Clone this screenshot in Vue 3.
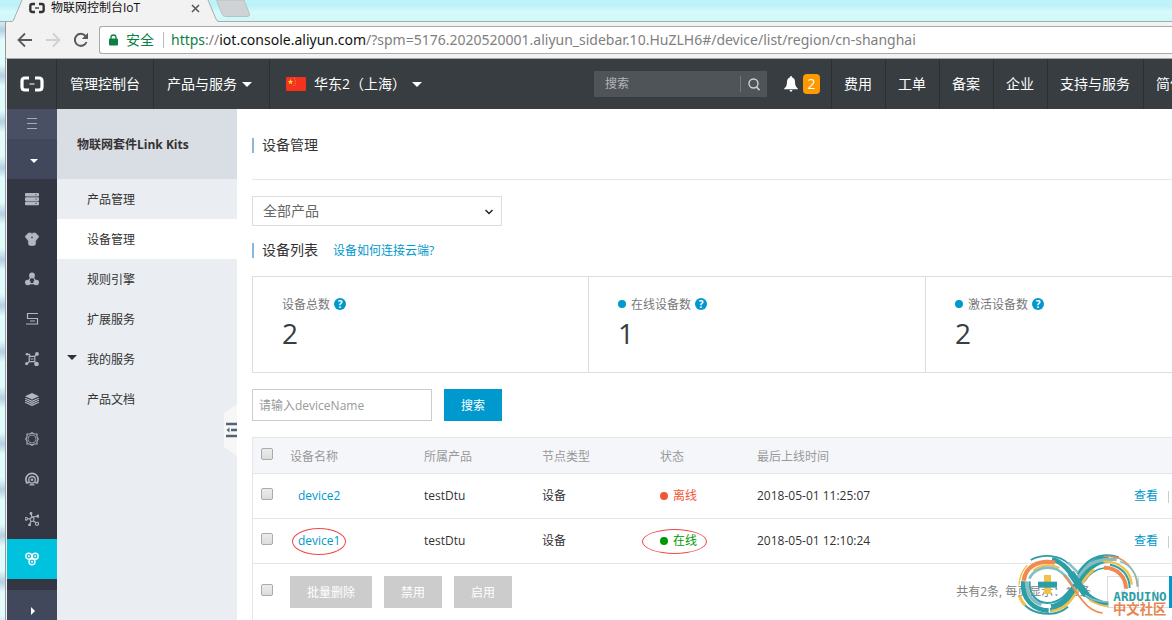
<script setup>
import { ref } from 'vue'

const navRight = ['费用', '工单', '备案', '企业', '支持与服务']

const railIcons = [
  {
    name: '服务器',
    art: '<rect x="0" y="1" width="14" height="3.6" rx="1" fill="currentColor"/><rect x="0" y="5.3" width="14" height="3.6" rx="1" fill="currentColor"/><rect x="0" y="9.6" width="14" height="3.6" rx="1" fill="currentColor"/><path d="M10.5 2.8h1M10.5 7.1h1M10.5 11.4h1" stroke="#333744"/>'
  },
  {
    name: '数据库',
    art: '<path d="M3.500 1h7L14 4.500 10.500 9v3.500L9 13.500H5L3.500 12.500V9L0 4.500z" fill="currentColor" stroke="currentColor" stroke-linejoin="round" stroke-width=".6"/><circle cx="7" cy="5.400" r=".8" fill="#333744"/><path d="M6 .5h2L7 2z" fill="#333744"/>'
  },
  {
    name: '负载均衡',
    art: '<g fill="currentColor"><circle cx="7" cy="3.4" r="2.9"/><circle cx="2.8" cy="10.5" r="2.8"/><circle cx="11.2" cy="10.5" r="2.8"/></g><path d="M5.8 5L3.4 9M8.2 5l2.4 4M4 11.6h6" stroke="currentColor" stroke-width="1.2"/>'
  },
  {
    name: '存储',
    art: '<path d="M13 1.500H2.500v5h10v5.500H1M5 9h5" fill="none" stroke="currentColor" stroke-width="1.2"/>'
  },
  {
    name: '专有网络',
    art: '<g fill="currentColor"><circle cx="12" cy="1.9" r="1.9"/><circle cx="2" cy="2.3" r="1.3"/><circle cx="1.7" cy="11.6" r="1.6"/><circle cx="11.5" cy="12" r="2.3"/></g><path d="M2 2.3h2.500L5 5M12 2L9.500 4.500M2 11.600L4.500 9.500M9.500 9.500l2 2.500M4.200 4.300h5.600v5.400H4.200zM5.500 7h3" fill="none" stroke="currentColor" stroke-width="1.2"/>'
  },
  {
    name: '分层服务',
    art: '<path d="M7 1l7 3.2-7 3.2L0 4.2z" fill="currentColor"/><path d="M0 6.2l7 3.2 7-3.2M0 8.2l7 3.2 7-3.2M0 10.2l7 3.2 7-3.2" fill="none" stroke="currentColor" stroke-width="1.2"/>'
  },
  {
    name: '配置',
    art: '<path d="M2 2h3l2-1.300L9 2h3v3l1.300 2L12 9v3H9l-2 1.300L5 12H2V9L.7 7 2 5z" fill="none" stroke="currentColor" stroke-width="1.100"/><circle cx="7" cy="7" r="4" fill="none" stroke="currentColor" stroke-width=".7"/>'
  },
  {
    name: '监控',
    art: '<path d="M2.500 11.500A6.100 6.100 0 1 1 11.500 11.500M.8 10.700h3M10.200 10.700h3" fill="none" stroke="currentColor" stroke-width="1.700"/><circle cx="7" cy="7.800" r="3.300" fill="none" stroke="currentColor" stroke-width="1.300"/><circle cx="7" cy="7.800" r="1.300" fill="currentColor"/><path d="M4.500 12.800h5" stroke="currentColor" stroke-width="1.300"/>'
  },
  {
    name: '网络拓扑',
    art: '<g fill="currentColor"><circle cx="6" cy="1.5" r="1.4"/><circle cx="13" cy="4.2" r="1.6"/><circle cx="4.6" cy="13" r="1.4"/></g><g fill="none" stroke="currentColor" stroke-width="1.1"><circle cx="1.2" cy="6.8" r="1.3"/><circle cx="12" cy="11.8" r="1.6"/><path d="M6 2l1 3 5-.8M2.5 6.800L5 7M4.600 12.500L6 9.500M8.500 9l2.500 1.800M7 5L4.800 7 6 9.500l2.500-.5.500-3z"/></g>'
  },
  {
    name: '物联网',
    active: true,
    art: '<g fill="none" stroke="currentColor" stroke-width="1.4"><circle cx="3.8" cy="4.2" r="3"/><circle cx="10.2" cy="4.2" r="3"/><circle cx="7" cy="9.8" r="3"/></g><g fill="currentColor"><circle cx="3.8" cy="4.2" r="1"/><circle cx="10.2" cy="4.2" r="1"/><circle cx="7" cy="9.8" r="1"/></g>'
  }
]

const menu = [
  { label: '产品管理' },
  { label: '设备管理', active: true },
  { label: '规则引擎' },
  { label: '扩展服务' },
  { label: '我的服务', group: true },
  { label: '产品文档' }
]

const stats = [
  { label: '设备总数', value: 2 },
  { label: '在线设备数', value: 1, dot: true },
  { label: '激活设备数', value: 2, dot: true }
]

const devices = [
  { name: 'device2', product: 'testDtu', type: '设备', online: false, time: '2018-05-01 11:25:07' },
  { name: 'device1', product: 'testDtu', type: '设备', online: true, marked: true, time: '2018-05-01 12:10:24' }
]

const product = ref('all')
const keyword = ref('')
const navKeyword = ref('')
</script>

<template>
  <div class="window">
    <div class="tabstrip">
      <svg class="tab-shape" width="252" height="22" viewBox="0 0 252 22" aria-hidden="true">
        <path d="M6 22 L13 21 L22 0 H208 L217 21 L219 22z" fill="#f2f2f2" />
        <path d="M6 21.5 H12 Q13.500 21 14 19 L22 0 M208 0 L216 19 Q217 21.500 219 21.500 H252" fill="none" stroke="#9fb0b3" />
        <path d="M216.500 0 H244 L249.500 14 Q250 16.500 247 16.500 H226 Q223 16.500 222 14z" fill="#cfd3d5" stroke="#b4c3c6" />
      </svg>
      <div class="tab">
        <svg width="16" height="12" viewBox="0 0 24 16" aria-hidden="true">
          <path d="M9 2H5Q2 2 2 5v6q0 3 3 3h4M15 2h4q3 0 3 3v6q0 3-3 3h-4" fill="none" stroke="#333" stroke-width="3.500" />
          <path d="M9 8h6" stroke="#333" stroke-width="2" />
        </svg>
        <span class="tab-title">物联网控制台IoT</span>
        <button class="tab-close" aria-label="关闭标签页">
          <svg width="9" height="9" viewBox="0 0 9 9"><path d="M1 1l7 7M8 1L1 8" stroke="#555" stroke-width="1.500" /></svg>
        </button>
      </div>
    </div>

    <div class="frame">
      <div class="toolbar">
        <button class="tool" aria-label="后退">
          <svg width="16" height="16" viewBox="0 0 16 16"><path d="M15 8H2M8 1.500L1.500 8 8 14.500" fill="none" stroke="#5a5a5a" stroke-width="1.800" /></svg>
        </button>
        <button class="tool" aria-label="前进">
          <svg width="16" height="16" viewBox="0 0 16 16"><path d="M1 8h13M8 1.500L14.500 8 8 14.500" fill="none" stroke="#d0d0d0" stroke-width="1.800" /></svg>
        </button>
        <button class="tool" aria-label="重新加载">
          <svg width="16" height="16" viewBox="0 0 16 16"><path d="M13.500 10A6 6 0 1 1 12.500 4" fill="none" stroke="#5a5a5a" stroke-width="2" /><path d="M15 .8V7H8.800z" fill="#5a5a5a" /></svg>
        </button>
        <div class="address">
          <svg width="9" height="12" viewBox="0 0 9 12" aria-hidden="true"><rect y="4.500" width="9" height="7" rx="1" fill="#0b8043" /><path d="M2 5V3.500a2.500 2.500 0 0 1 5 0V5" fill="none" stroke="#0b8043" stroke-width="1.300" /></svg>
          <span class="secure">安全</span>
          <span class="url"><span class="scheme">https</span><span class="rest">://</span>iot.console.aliyun.com<span class="rest">/?spm=5176.2020520001.aliyun_sidebar.10.HuZLH6#/device/list/region/cn-shanghai</span></span>
        </div>
      </div>

      <header class="nav">
        <a class="brand" href="#" aria-label="首页">
          <svg width="24" height="16" viewBox="0 0 24 16"><path d="M9 2H5Q2 2 2 5v6q0 3 3 3h4M15 2h4q3 0 3 3v6q0 3-3 3h-4" fill="none" stroke="#fff" stroke-width="3.200" /><path d="M9.500 8h5" stroke="#9da1a4" stroke-width="2" /></svg>
        </a>
        <a class="nav-item" href="#">管理控制台</a>
        <button class="nav-item services">产品与服务<i class="caret"></i></button>
        <button class="nav-item region">
          <svg width="20" height="14" viewBox="0 0 20 14" aria-hidden="true"><rect width="20" height="14" rx="1" fill="#f5321e" /><path d="M4.500 2l.8 1.900 2 .1-1.600 1.300.6 2-1.800-1.100L2.700 7.300l.6-2L1.700 4l2-.1z" fill="#ffd83b" /><path d="M8 1.500h1M9.500 3.500v1M9.500 6v1M7.500 8.300h1" stroke="#f5a32a" /></svg>
          <span>华东2（上海）</span><i class="caret"></i>
        </button>
        <div class="nav-end">
          <div class="nav-search">
            <input v-model="navKeyword" type="text" placeholder="搜索" aria-label="搜索" />
            <button aria-label="执行搜索">
              <svg width="12" height="13" viewBox="0 0 12 13"><circle cx="5.500" cy="5.500" r="4.500" fill="none" stroke="#d0d2d3" stroke-width="1.400" /><path d="M8.500 9l3 3.200" stroke="#d0d2d3" stroke-width="1.600" /></svg>
            </button>
          </div>
          <button class="notice" aria-label="消息">
            <svg width="14" height="16" viewBox="0 0 14 16"><path d="M7 0q1 0 1 1.300Q11 2.300 11 6q0 4.500 2.800 6.500v.8H.2v-.8Q3 10.500 3 6q0-3.700 3-4.700Q6 0 7 0zM5.500 14h3q-.3 1.800-1.500 1.800T5.500 14z" fill="#fff" /></svg>
            <span class="badge">2</span>
          </button>
          <a v-for="item in navRight" :key="item" class="nav-item link" href="#">{{ item }}</a>
          <a class="nav-item link lang" href="#">简体</a>
        </div>
      </header>

      <div class="body">
        <nav class="rail" aria-label="产品">
          <button class="rail-top" aria-label="菜单">
            <svg width="10" height="12" viewBox="0 0 10 12"><path d="M0 .5h10M0 5.500h10M0 10.500h10" stroke="#a5abba" /></svg>
          </button>
          <button class="rail-toggle" aria-label="展开"><i class="caret"></i></button>
          <a v-for="icon in railIcons" :key="icon.name" class="rail-item" :class="{ active: icon.active }" href="#" :aria-label="icon.name">
            <svg width="14" height="14" viewBox="0 0 14 14" v-html="icon.art"></svg>
          </a>
          <button class="rail-bottom" aria-label="更多"><i class="caret-right"></i></button>
        </nav>

        <aside class="side">
          <h2>物联网套件Link Kits</h2>
          <a v-for="item in menu" :key="item.label" class="side-item" :class="{ active: item.active }" href="#">
            <i v-if="item.group" class="group-caret"></i>{{ item.label }}
          </a>
          <button class="fold" aria-label="收起菜单">
            <svg width="13" height="52" viewBox="0 0 13 52"><path d="M13 0v52L0 43V9z" fill="#f7f7f7" /><path d="M2 20h11M7 26h6M2 32h11" stroke="#546478" stroke-width="2.400" /><path d="M5.500 23.500v5L2.500 26z" fill="#546478" /></svg>
          </button>
        </aside>

        <main class="main">
          <h1 class="page-title"><span class="bar">设备管理</span></h1>
          <div class="select-wrap">
            <select v-model="product" aria-label="产品">
              <option value="all">全部产品</option>
            </select>
            <svg class="chevron" width="8" height="6" viewBox="0 0 8 6" aria-hidden="true"><path d="M.5 1L4 4.500 7.500 1" fill="none" stroke="#222" stroke-width="1.500" /></svg>
          </div>
          <div class="section-title">
            <h2 class="bar">设备列表</h2>
            <a href="#">设备如何连接云端?</a>
          </div>

          <div class="stats">
            <section v-for="s in stats" :key="s.label" class="stat">
              <div class="stat-label">
                <i v-if="s.dot" class="dot"></i><span>{{ s.label }}</span><span class="help">?</span>
              </div>
              <div class="stat-value">{{ s.value }}</div>
            </section>
          </div>

          <form class="filter" @submit.prevent>
            <input v-model="keyword" type="text" placeholder="请输入deviceName" aria-label="deviceName" />
            <button type="submit">搜索</button>
          </form>

          <table class="devices">
            <colgroup>
              <col class="c-check" /><col class="c-name" /><col class="c-product" /><col class="c-type" /><col class="c-status" /><col class="c-time" /><col />
            </colgroup>
            <thead>
              <tr>
                <th class="check"><input type="checkbox" aria-label="全选" /></th>
                <th>设备名称</th>
                <th>所属产品</th>
                <th>节点类型</th>
                <th>状态</th>
                <th>最后上线时间</th>
                <th></th>
              </tr>
            </thead>
            <tbody>
              <tr v-for="d in devices" :key="d.name">
                <td><input type="checkbox" :aria-label="'选择 ' + d.name" /></td>
                <td class="name"><span class="mark-box"><a href="#">{{ d.name }}</a><i v-if="d.marked" class="mark"></i></span></td>
                <td>{{ d.product }}</td>
                <td>{{ d.type }}</td>
                <td>
                  <span class="mark-box status" :class="d.online ? 'on' : 'off'"><i class="dot"></i>{{ d.online ? '在线' : '离线' }}<i v-if="d.marked" class="mark wide"></i></span>
                </td>
                <td>{{ d.time }}</td>
                <td class="actions"><a href="#">查看</a><i class="sep"></i></td>
              </tr>
            </tbody>
          </table>

          <div class="table-foot">
            <input type="checkbox" aria-label="选择全部设备" />
            <button disabled>批量删除</button>
            <button disabled>禁用</button>
            <button disabled>启用</button>
            <span class="total">共有2条, 每页显示：10条</span>
            <div class="pager">
              <button aria-label="首页">«</button>
              <button aria-label="上一页">‹</button>
              <button class="current" aria-label="第1页"></button>
            </div>
          </div>
        </main>
      </div>
    </div>

    <svg class="watermark" width="157" height="68" viewBox="225 246 471 204" role="img" aria-label="Arduino 中文社区">
      <g fill="none">
        <path d="M336 268 C372 276 392 308 418 348 C446 388 475 400 505 403" stroke="#2e9ea6" stroke-width="15" />
        <path d="M330 414 C370 410 392 378 414 342 C436 300 462 268 506 267" stroke="#2e9ea6" stroke-width="22" />
        <path d="M412 324 C436 286 462 266 530 268" stroke="#83bfc2" stroke-width="11" />
        <path d="M412 312 C432 284 452 262 490 257 C512 255 524 258 536 263" stroke="#2e9ea6" stroke-width="7" />
        <path d="M490 260 C552 250 590 300 592 350" stroke="#f08a52" stroke-width="4" />
        <path d="M540 274 C574 286 593 315 594 350" stroke="#83bfc2" stroke-width="5" />
        <path d="M490 275 C540 272 574 306 575 344" stroke="#f2c14a" stroke-width="7" />
        <path d="M510 284 C544 290 568 315 569 354" stroke="#2e9ea6" stroke-width="6" />
        <path d="M492 293 C532 292 558 322 558 356" stroke="#f08a52" stroke-width="12" />
        <path d="M432 336 Q456 298 492 294" stroke="#2e9ea6" stroke-width="5" />
        <path d="M272 270 C310 250 360 255 386 282" stroke="#2e9ea6" stroke-width="5" />
        <path d="M384 278 L414 308" stroke="#83bfc2" stroke-width="7" />
        <path d="M251 332 C256 290 295 268 345 278" stroke="#f08a52" stroke-width="13" />
        <path d="M280 302 C306 282 336 283 358 294" stroke="#f2c14a" stroke-width="7" />
        <path d="M268 326 C282 296 320 286 350 298 C384 314 392 344 410 364" stroke="#83bfc2" stroke-width="8" />
        <path d="M262 286 C246 302 238 322 237 345" stroke="#f2c14a" stroke-width="4" />
        <path d="M250 334 C244 386 280 420 326 422" stroke="#2e9ea6" stroke-width="14" />
        <path d="M261 334 C258 380 284 400 308 405" stroke="#83bfc2" stroke-width="9" />
        <path d="M304 405 Q320 410 333 408" stroke="#fff" stroke-width="10" />
        <path d="M269 334 C266 376 292 398 322 399 C360 398 382 372 402 344" stroke="#2e9ea6" stroke-width="6" />
        <path d="M237 376 C252 416 286 432 330 431 C356 430 370 422 384 410" stroke="#2e9ea6" stroke-width="6" />
        <path d="M238 376 Q243 394 256 406" stroke="#f2c14a" stroke-width="9" />
        <path d="M334 423 C380 420 400 382 424 344 Q440 315 462 298" stroke="#f2c14a" stroke-width="8" />
        <path d="M372 316 C400 348 420 394 450 414 Q466 426 488 429" stroke="#f08a52" stroke-width="5" />
        <path d="M418 358 C440 386 466 394 504 396" stroke="#83bfc2" stroke-width="5" />
        <path d="M392 308 L438 374" stroke="#2e9ea6" stroke-width="21" />
        <path d="M448 390 Q474 406 506 409" stroke="#f2c14a" stroke-width="6" />
      </g>
      <path d="M312 315h21v57h-21z" fill="#f2c14a" />
      <path d="M294 335h57v18h-57z" fill="#2e9ea6" />
      <text class="wm-latin" x="520" y="392">ARDUINO</text>
      <text class="wm-cjk" x="519" y="433">中文社区</text>
    </svg>
  </div>
</template>

<style>
html,
body {
  margin: 0;
  overflow: hidden;
}
</style>

<style scoped>
* {
  box-sizing: border-box;
}
.window {
  position: relative;
  display: flex;
  flex-direction: column;
  height: 100vh;
  overflow: hidden;
  font-family: "Open Sans", "Noto Sans CJK SC", sans-serif;
  font-size: 12px;
  line-height: 20px;
  color: #333;
  background: repeating-linear-gradient(180deg, #e2fcfd 0, #e2fcfd 18px, #b5cfe4 30px, #e2fcfd 40px, #e2fcfd 46px);
}
a {
  color: #0099cd;
  text-decoration: none;
}
button {
  display: flex;
  align-items: center;
  justify-content: center;
  padding: 0;
  border: 0;
  background: none;
  color: inherit;
  font: inherit;
}
h1,
h2 {
  margin: 0;
  font-size: 14px;
  font-weight: 400;
}
i {
  font-style: normal;
}

/* browser chrome */
.tabstrip {
  position: relative;
  flex: none;
  height: 22px;
  background: linear-gradient(180deg, #bdf3f9 0, #bff2f8 6px, #d6fbfb 12px, #d0f6f8 21px, #9fb0b3 21px);
}
.tab-shape {
  position: absolute;
  left: 0;
  top: 0;
}
.tab {
  position: relative;
  display: flex;
  align-items: center;
  width: 200px;
  height: 16px;
  margin-left: 29px;
}
.tab-title {
  margin-left: 6px;
  line-height: 16px;
  color: #111;
}
.tab-close {
  margin: 0 29px 0 auto;
}
.frame {
  display: flex;
  flex: 1;
  flex-direction: column;
  min-height: 0;
  margin-left: 5px;
  border-left: 1px solid #999;
  background: #f2f2f2;
}
.toolbar {
  display: flex;
  flex: none;
  align-items: center;
  height: 37px;
  padding-left: 11px;
  border-bottom: 1px solid #a8a8a8;
}
.tool {
  width: 16px;
  height: 16px;
  margin-right: 12px;
}
.address {
  display: flex;
  flex: 1;
  align-items: center;
  min-width: 0;
  height: 28px;
  margin-left: -2px;
  padding-left: 9px;
  border: 1px solid #a9a9a9;
  border-right: 0;
  border-radius: 3px 0 0 3px;
  background: #fff;
  font-size: 14px;
  white-space: nowrap;
}
.secure {
  margin-left: 8px;
  padding-right: 9px;
  color: #0b8043;
}
.url {
  padding-left: 7px;
  border-left: 1px solid #bbb;
  font-family: "Noto Sans", "Open Sans", sans-serif;
  line-height: 16px;
  color: #111;
}
.scheme {
  color: #0b8043;
}
.rest {
  color: #808080;
}

/* console header */
.nav {
  display: flex;
  flex: none;
  height: 50px;
  margin-left: 1px;
  background: #373d41;
  color: #fff;
  font-size: 14px;
  white-space: nowrap;
}
.brand {
  display: flex;
  align-items: center;
  justify-content: center;
  width: 50px;
  border-right: 1px solid #2a2f32;
}
.nav-item {
  display: flex;
  flex: none;
  align-items: center;
  padding: 0 13px;
  border-right: 1px solid #2a2f32;
  color: #fff;
}
.services .caret {
  margin-left: 5px;
}
.services {
  padding-right: 17px;
}
.region {
  padding: 0 16px;
  border: 0;
}
.region span {
  margin: 0 6px 0 8px;
}
.caret {
  border: 5px solid transparent;
  border-top-color: currentColor;
  border-bottom: 0;
}
.nav-end {
  display: flex;
  align-items: center;
  margin-left: auto;
}
.nav-search {
  display: flex;
  align-items: center;
  width: 173px;
  height: 26px;
  background: #4f5458;
}
.nav-search input {
  flex: 1;
  min-width: 0;
  height: 16px;
  padding: 0 0 0 11px;
  border: 0;
  border-right: 1px solid #74787b;
  background: none;
  color: #fff;
  font: inherit;
  font-size: 12px;
}
.nav-search input::placeholder {
  color: #b4b6b8;
}
.nav-search button {
  width: 26px;
}
.notice {
  gap: 5px;
  padding: 0 11px 0 17px;
}
.badge {
  width: 17px;
  height: 20px;
  border-radius: 4px;
  background: #ff9900;
  line-height: 20px;
}
.link {
  height: 50px;
  padding: 0 13px 0 12px;
  border-right: 0;
  border-left: 1px solid #2a2f32;
}
.lang {
  width: 29px;
  padding-right: 0;
  overflow: hidden;
}

/* icon rail */
.body {
  display: flex;
  flex: 1;
  min-height: 0;
  margin-left: 1px;
  background: #fff;
}
.rail {
  display: flex;
  flex: none;
  flex-direction: column;
  width: 50px;
  background: #333744;
}
.rail-top {
  flex: none;
  height: 30px;
  background: #4a5064;
}
.rail-toggle {
  flex: none;
  height: 40px;
  padding: 4px 0 0 3px;
  background: #42485b;
  color: #fff;
}
.rail-toggle .caret {
  border-width: 4px 4px 0;
}
.rail-item {
  display: flex;
  flex: none;
  align-items: center;
  justify-content: center;
  height: 40px;
  color: #b0b6c2;
}
.rail-item.active {
  background: #00c1de;
  color: #fff;
}
.rail-bottom {
  flex: 1;
  align-items: flex-start;
  margin-top: 11px;
  padding: 17px 0 0 2px;
  background: #42485b;
}
.caret-right {
  border: 4px solid transparent;
  border-left-color: #fff;
  border-right: 0;
}

/* product menu */
.side {
  position: relative;
  flex: none;
  width: 180px;
  background: #eaedf1;
}
.side h2 {
  height: 70px;
  padding-left: 20px;
  background: #d9dde4;
  font-size: 12px;
  font-weight: 700;
  line-height: 72px;
}
.side-item {
  display: block;
  position: relative;
  height: 40px;
  padding-left: 30px;
  color: #333;
  line-height: 42px;
}
.side-item.active {
  background: #fff;
}
.group-caret {
  position: absolute;
  left: 10px;
  top: 16px;
  border: 5px solid transparent;
  border-top-color: #333;
  border-bottom: 0;
}
.fold {
  position: absolute;
  right: 0;
  top: 295px;
}

/* main content */
.main {
  display: flex;
  flex: 1;
  flex-direction: column;
  min-width: 0;
  padding-left: 15px;
}
.page-title {
  padding: 26px 0 24px;
  border-bottom: 1px solid #e6e6e6;
}
.bar {
  display: flex;
  align-items: center;
}
.bar::before {
  content: "";
  width: 2px;
  height: 15px;
  margin-right: 8px;
  background: #88b7e0;
}
.select-wrap {
  position: relative;
  width: 250px;
  height: 30px;
  margin-top: 16px;
}
select {
  width: 100%;
  height: 100%;
  padding: 0 10px;
  border: 1px solid #ddd;
  border-radius: 0;
  background: #fff;
  appearance: none;
  color: #666;
  font: inherit;
  font-size: 14px;
}
.chevron {
  position: absolute;
  right: 9px;
  top: 13px;
}
.section-title {
  display: flex;
  gap: 15px;
  height: 20px;
  margin-top: 14px;
}
.section-title a {
  line-height: 22px;
}
.stats {
  display: grid;
  grid-template-columns: 335px 337px 1fr;
  margin-top: 16px;
  border: 1px solid #ddd;
  border-right: 0;
}
.stat {
  padding: 17px 29px 20px;
}
.stat + .stat {
  border-left: 1px solid #ddd;
}
.stat-label {
  display: flex;
  align-items: center;
  height: 20px;
  color: #777;
  white-space: nowrap;
}
.stat-label > span:first-of-type {
  padding-top: 2px;
}
.dot {
  width: 8px;
  height: 8px;
  margin-right: 5px;
  border-radius: 50%;
  background: #0099cd;
}
.help {
  width: 12px;
  height: 12px;
  margin-left: 4px;
  border-radius: 50%;
  background: #0099cd;
  color: #fff;
  font-size: 10px;
  font-weight: 700;
  line-height: 12px;
  text-align: center;
}
.stat-value {
  color: #373d41;
  font-size: 28px;
  line-height: 38px;
}
.filter {
  display: flex;
  gap: 12px;
  margin-top: 16px;
}
.filter input {
  width: 180px;
  height: 32px;
  padding: 0 6px;
  border: 1px solid #ccc;
  color: #333;
  font: inherit;
}
.filter input::placeholder {
  color: #999;
}
.filter button {
  width: 58px;
  height: 32px;
  padding-top: 2px;
  background: #0099cd;
  color: #fff;
}
.devices {
  width: 100%;
  margin-top: 16px;
  border-spacing: 0;
  border-left: 1px solid #e1e6eb;
  table-layout: fixed;
}
.c-check {
  width: 37px;
}
.c-name {
  width: 134px;
}
.c-product,
.c-type {
  width: 118px;
}
.c-status {
  width: 97px;
}
.c-time {
  width: 377px;
}
th,
td {
  padding: 0;
  border-bottom: 1px solid #e1e6eb;
  text-align: left;
  white-space: nowrap;
}
th {
  height: 37px;
  padding-top: 2px;
  border-top: 1px solid #e1e6eb;
  background: #f5f6fa;
  color: #999;
  font-weight: 400;
}
.check {
  padding-top: 0;
}
td {
  height: 45px;
}
input[type="checkbox"] {
  display: block;
  flex: none;
  width: 12px;
  height: 12px;
  margin: 0 0 4px 8px;
  border: 1px solid #aaa;
  border-radius: 2px;
  background: linear-gradient(#ececec, #dcdcdc);
  appearance: none;
}
.name {
  padding-left: 8px;
}
.mark-box {
  position: relative;
  display: inline-flex;
  align-items: center;
}
.mark {
  position: absolute;
  inset: -3px -6px -4px -6px;
  border: 1px solid #f04848;
  border-radius: 50%;
}
.mark.wide {
  inset: -2px -10px -3px -18px;
}
.on {
  color: #090;
}
.off {
  color: #f15533;
}
.status .dot {
  background: currentColor;
}
.sep {
  display: inline-block;
  width: 1px;
  height: 12px;
  margin-left: 10px;
  background: #ccc;
  vertical-align: middle;
}
.table-foot {
  display: flex;
  flex: 1;
  align-items: flex-start;
  padding-top: 12px;
  border-left: 1px solid #e1e6eb;
  white-space: nowrap;
}
.table-foot > input {
  margin: 8px 17px 0 8px;
}
.table-foot > button {
  height: 32px;
  margin-right: 12px;
  padding: 2px 17px 0;
  background: #ccc;
  color: #fff;
}
.total {
  margin-left: auto;
  color: #808080;
  line-height: 32px;
}
.pager {
  display: flex;
  margin-left: 16px;
}
.pager button {
  width: 31px;
  height: 32px;
  border: 1px solid #ddd;
  border-right: 0;
  color: #ccc;
}
.pager .current {
  width: 3px;
  border: 0;
  background: #0099cd;
}

/* community mark over the page corner */
.watermark {
  position: absolute;
  right: 0;
  bottom: 0;
}
.wm-latin {
  fill: #2e9ea6;
  font: 700 38px "DejaVu Sans Mono", monospace;
}
.wm-cjk {
  fill: #e8854f;
  font: 700 40px "Noto Sans CJK SC", sans-serif;
}
</style>
